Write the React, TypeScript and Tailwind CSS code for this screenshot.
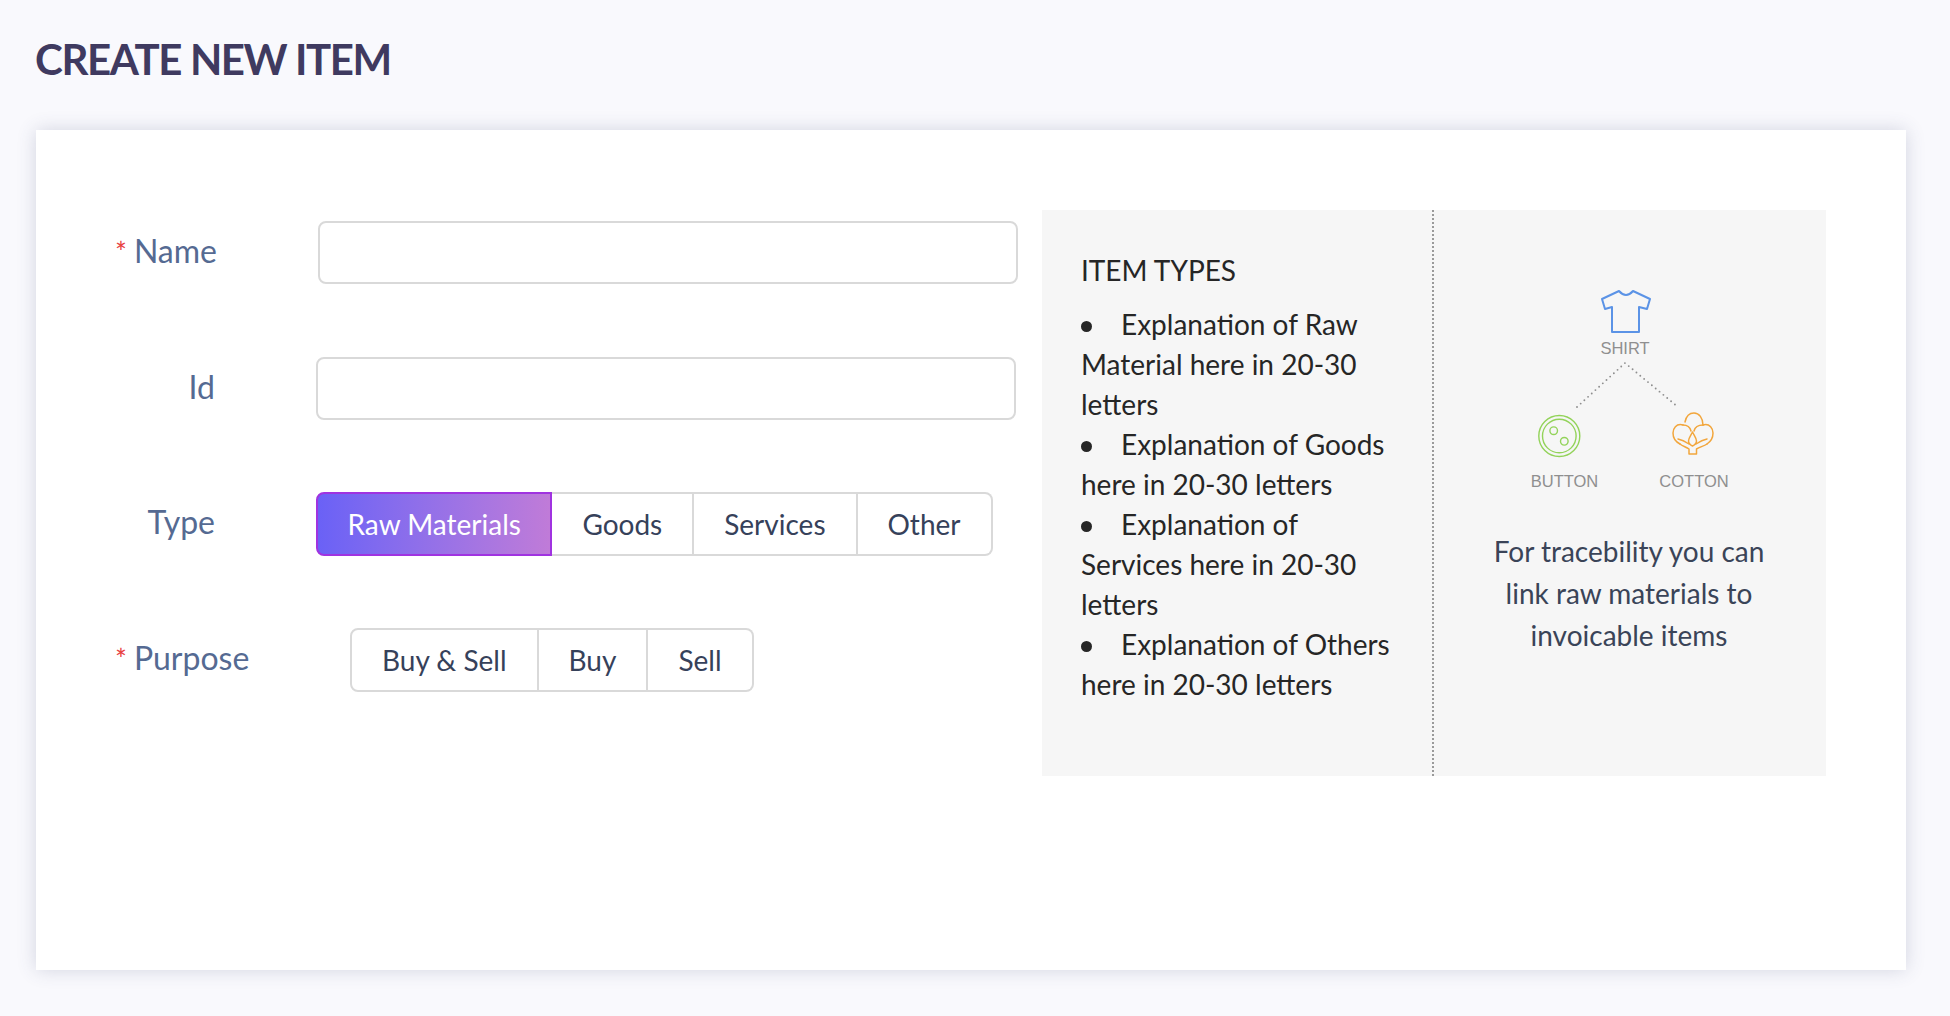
const typeOptions = ['Raw Materials', 'Goods', 'Services', 'Other']
const purposeOptions = ['Buy & Sell', 'Buy', 'Sell']

const explanations = [
  'Explanation of Raw Material here in 20-30 letters',
  'Explanation of Goods here in 20-30 letters',
  'Explanation of Services here in 20-30 letters',
  'Explanation of Others here in 20-30 letters',
]

function Segmented({ options, active }: { options: string[]; active?: string }) {
  return (
    <div className="flex h-[64px]">
      {options.map((option, i) => (
        <button
          key={option}
          className={
            option === active
              ? 'rounded-l-[8px] border-2 border-[#a033e0] bg-gradient-to-r from-[#6a61f6] to-[#c07bd8] px-[29.5px] text-white'
              : `border-y-2 border-r-2 border-[#d9d9d9] bg-white px-[30px] text-[#36415a] ${
                  i === 0 ? 'rounded-l-[8px] border-l-2' : ''
                } ${i === options.length - 1 ? 'rounded-r-[8px]' : ''}`
          }
        >
          {option}
        </button>
      ))}
    </div>
  )
}

function Label({ text, required, className }: { text: string; required?: boolean; className: string }) {
  return (
    <label className={`mt-[-4px] shrink-0 text-[32px] text-[#556a92] ${className}`}>
      {required ? <span className="ml-[-1px] mr-[7px] text-[28px] text-[#e8413f]">*</span> : null}
      {text}
    </label>
  )
}

function TraceDiagram() {
  return (
    <svg width="220" height="230" viewBox="0 0 220 230" fill="none">
      <path
        d="M82 29 L99 21 Q106 29 113 21 L130 29 L127 39 L119 37 V62 H92 V37 L85 39 Z"
        stroke="#5b93e6"
        strokeWidth="2"
        strokeLinejoin="round"
      />
      <path
        d="M57 137 L105 93 L158 137"
        stroke="#8f8f8f"
        strokeWidth="1.9"
        strokeLinecap="round"
        strokeDasharray="0 5"
      />
      <g stroke="#93d35a" strokeWidth="1.4">
        <circle cx="39.3" cy="166" r="20.5" />
        <circle cx="39.3" cy="166" r="16.8" />
        <circle cx="33.7" cy="160.7" r="3.8" />
        <circle cx="44.3" cy="171.3" r="3.8" />
      </g>
      <g stroke="#f2a63c" strokeWidth="1.5" strokeLinecap="round" strokeLinejoin="round">
        <path d="M165 152 C166 147 169 143 174 143 C179 143 183 148 183 155" />
        <path d="M163 155 C156 153 153 159 153 163 C153 168 156 172 160 174" />
        <path d="M183 155 C190 153 193 159 193 163 C193 168 190 172 187 174" />
        <path d="M163 155 C167 155 170 157 171 161" />
        <path d="M183 155 C179 155 175 157 174 161" />
        <path d="M158 169 C163 170 166 172 169 174" />
        <path d="M187 169 C182 170 179 172 176 174" />
        <path d="M172.5 162 C170.5 166 168.5 168 168.5 171 C168.5 173 170.5 175 172.5 176 C174.5 175 176.5 173 176.5 171 C176.5 168 174.5 166 172.5 162 Z" />
        <path d="M160 174 C162 176 166 177 169 179 V184 H176.5 V179 C180 177 184 176 187 174" />
      </g>
      <g fill="#8f8f8f" fontFamily="'Liberation Sans', sans-serif" fontSize="16.5" textAnchor="middle">
        <text x="105" y="84">SHIRT</text>
        <text x="44.5" y="217">BUTTON</text>
        <text x="174" y="217">COTTON</text>
      </g>
    </svg>
  )
}

export default function App() {
  return (
    <div className="min-h-[1016px] bg-[#f9f9fd] pl-[36px] pr-[44px] pt-[32px] font-['Lato',sans-serif]">
      <h1 className="ml-[-1px] text-[42px] font-bold leading-[54px] tracking-[-1.4px] text-[#3f3a60]">CREATE NEW ITEM</h1>

      <div className="mt-[44px] flex h-[840px] bg-white pl-[80px] pr-[80px] pt-[80px] shadow-[0_0_18px_rgba(60,70,110,0.2)]">
        <div className="w-[902px] shrink-0 text-[28px]">
          <div className="mt-[11px] flex items-center">
            <Label text="Name" required className="w-[202px]" />
            <input className="h-[63px] w-[700px] rounded-[8px] border-2 border-[#d9d9d9]" />
          </div>
          <div className="mt-[73px] flex items-center">
            <Label text="Id" className="w-[200px] pr-[101px] text-right" />
            <input className="h-[63px] w-[700px] rounded-[8px] border-2 border-[#d9d9d9]" />
          </div>
          <div className="mt-[72px] flex items-center">
            <Label text="Type" className="w-[200px] pr-[101px] text-right" />
            <Segmented options={typeOptions} active="Raw Materials" />
          </div>
          <div className="mt-[72px] flex items-center">
            <Label text="Purpose" required className="w-[234px]" />
            <Segmented options={purposeOptions} />
          </div>
        </div>

        <div className="ml-[24px] flex h-[566px] w-[784px] bg-[#f6f6f6]">
          <div className="w-[392px] shrink-0 border-r-2 border-dotted border-[#9a9a9a] pl-[39px] pr-[30px] pt-[40px] text-[28px] leading-[40px] text-[#262626]">
            <h2>ITEM TYPES</h2>
            <ul className="mt-[14px]">
              {explanations.map((line) => (
                <li key={line}>
                  <span className="mr-[29px] inline-block size-[11px] rounded-full bg-[#262626] align-[3px]" />
                  {line}
                </li>
              ))}
            </ul>
          </div>
          <div className="flex flex-1 flex-col items-center pt-[60px] text-center text-[28px] leading-[42px] text-[#3a4458]">
            <TraceDiagram />
            <p className="mt-[30px] w-[320px] pr-[2px]">For tracebility you can link raw materials to invoicable items</p>
          </div>
        </div>
      </div>
    </div>
  )
}
